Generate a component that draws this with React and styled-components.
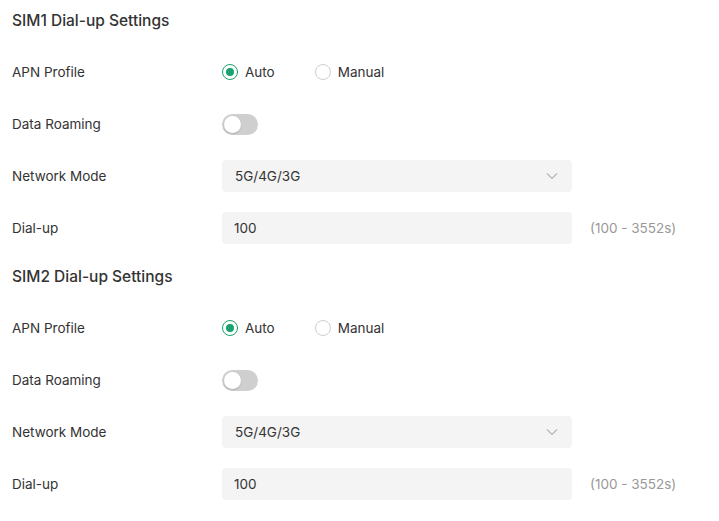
import React, { useState } from "react";
import styled, { createGlobalStyle } from "styled-components";

const GlobalStyle = createGlobalStyle`
  body {
    margin: 0;
    background: #fff;
    font-family: Inter, "Noto Sans", sans-serif;
    color: #333;
  }
`;

const SimSection = ({ sim }) => {
  const [apn, setApn] = useState("auto");
  const [roaming, setRoaming] = useState(false);
  const [dialup, setDialup] = useState("100");

  return (
    <Section>
      <Title>SIM{sim} Dial-up Settings</Title>
      <Rows>
        <Row>
          <Label>APN Profile</Label>
          <RadioGroup>
            <RadioOption onClick={() => setApn("auto")}>
              <RadioCircle checked={apn === "auto"} />
              Auto
            </RadioOption>
            <RadioOption onClick={() => setApn("manual")}>
              <RadioCircle checked={apn === "manual"} />
              Manual
            </RadioOption>
          </RadioGroup>
        </Row>
        <Row>
          <Label>Data Roaming</Label>
          <Toggle on={roaming} onClick={() => setRoaming(!roaming)}>
            <Knob on={roaming} />
          </Toggle>
        </Row>
        <Row>
          <Label>Network Mode</Label>
          <Select>
            <span>5G/4G/3G</span>
            <svg width="12" height="8" viewBox="0 0 12 8" fill="none">
              <path d="M1 1.5l5 5 5-5" stroke="#b5b5b5" strokeWidth="1.1" />
            </svg>
          </Select>
        </Row>
        <Row>
          <Label>Dial-up</Label>
          <Input value={dialup} onChange={(e) => setDialup(e.target.value)} />
          <Hint>(100 - 3552s)</Hint>
        </Row>
      </Rows>
    </Section>
  );
};

const App = () => {
  return (
    <>
      <GlobalStyle />
      <Page>
        <SimSection sim={1} />
        <SimSection sim={2} />
      </Page>
    </>
  );
};

export default App;

const Page = styled.div`
  display: flex;
  flex-direction: column;
  gap: 2px;
  padding: 0 12px;
`;

const Section = styled.section`
  display: flex;
  flex-direction: column;
`;

const Title = styled.div`
  height: 40px;
  line-height: 41px;
  font-size: 15.5px;
  font-weight: 500;
  color: #333;
`;

const Rows = styled.div`
  padding-top: 6px;
`;

const Row = styled.div`
  display: flex;
  align-items: center;
  height: 52px;
`;

const Label = styled.div`
  width: 210px;
  font-size: 13.5px;
  color: #333;
`;

const RadioGroup = styled.div`
  display: flex;
  gap: 40px;
`;

const RadioOption = styled.label`
  display: flex;
  align-items: center;
  gap: 7px;
  font-size: 13.5px;
  color: #333;
  cursor: pointer;
`;

const RadioCircle = styled.span`
  box-sizing: border-box;
  width: 16px;
  height: 16px;
  border-radius: 50%;
  border: 1px solid ${(p) => (p.checked ? "#1aa46d" : "#cfcfcf")};
  display: flex;
  align-items: center;
  justify-content: center;

  &::after {
    content: "";
    width: 8px;
    height: 8px;
    border-radius: 50%;
    background: ${(p) => (p.checked ? "#1aa46d" : "transparent")};
  }
`;

const Toggle = styled.div`
  box-sizing: border-box;
  width: 36px;
  height: 21px;
  border-radius: 11px;
  background: ${(p) => (p.on ? "#1aa46d" : "#cfcfcf")};
  padding: 2px;
  display: flex;
  justify-content: ${(p) => (p.on ? "flex-end" : "flex-start")};
  cursor: pointer;
`;

const Knob = styled.div`
  width: 17px;
  height: 17px;
  border-radius: 50%;
  background: #fff;
  box-shadow: 0 1px 2px rgba(0, 0, 0, 0.15);
`;

const Select = styled.div`
  box-sizing: border-box;
  width: 350px;
  height: 32px;
  border-radius: 4px;
  background: #f4f4f4;
  padding: 0 14px 0 13px;
  display: flex;
  align-items: center;
  justify-content: space-between;
  font-size: 13.5px;
  color: #333;
`;

const Input = styled.input`
  box-sizing: border-box;
  width: 350px;
  height: 32px;
  border: none;
  outline: none;
  border-radius: 4px;
  background: #f4f4f4;
  padding: 0 12px;
  font-family: Inter, "Noto Sans", sans-serif;
  font-size: 13.5px;
  color: #333;
`;

const Hint = styled.span`
  margin-left: 18px;
  font-size: 13.5px;
  color: #999;
`;
